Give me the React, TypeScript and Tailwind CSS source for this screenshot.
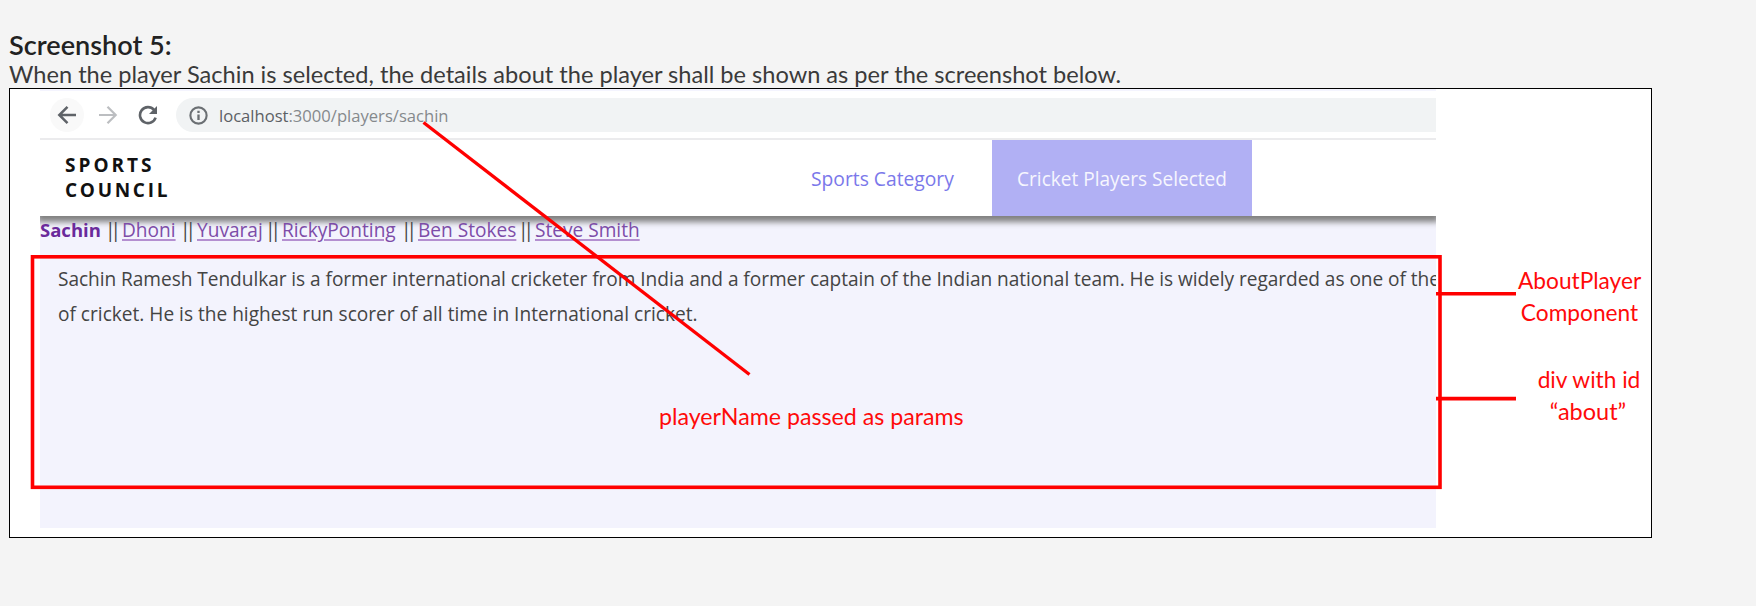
import React from "react";

const UI = "font-['Open_Sans','Noto_Sans',sans-serif]";

const players = [
  { name: "Dhoni", width: "w-[54px]" },
  { name: "Yuvaraj", width: "w-[64px]" },
  { name: "RickyPonting", width: "w-[115px]" },
  { name: "Ben Stokes", width: "w-[96px]" },
  { name: "Steve Smith", width: "w-[105px]" },
];

function Toolbar() {
  return (
    <div className="flex h-[51px] flex-col border-t-2 border-b-2 border-t-[#f4f4fe] border-b-[#ebebed]">
      <div className="mt-[7px] flex h-[34px] items-center pl-[10px]">
        <div className="flex h-[34px] w-[34px] items-center justify-center rounded-full bg-[#f9f9f9]">
          <svg width="20" height="20" viewBox="0 0 20 20" fill="none" stroke="#5f6368" strokeWidth="2.5">
            <path d="M19 10H3M10.5 1.8L2.3 10l8.2 8.2" />
          </svg>
        </div>
        <svg className="ml-[14px]" width="20" height="20" viewBox="0 0 20 20" fill="none" stroke="#bcbec1" strokeWidth="2.2">
          <path d="M1 10h16M9.5 1.8l8.2 8.2-8.2 8.2" />
        </svg>
        <svg className="ml-[20px]" width="20" height="20" viewBox="0 0 20 20" fill="none" stroke="#5f6368" strokeWidth="2.6">
          <path d="M16 4.8A8 8 0 1 0 17.6 12.6" />
          <path d="M19 1v8h-8z" fill="#5f6368" stroke="none" />
        </svg>
        <div className="ml-[18px] flex h-[34px] flex-1 items-center rounded-l-full bg-[#f1f3f4] pl-[13px]">
          <svg width="19" height="19" viewBox="0 0 18 18" fill="none" stroke="#6b6f73" strokeWidth="2">
            <circle cx="9" cy="9" r="7.7" />
            <path d="M9 8v5.2M9 4.6v2.1" strokeWidth="2.2" />
          </svg>
          <span className={`${UI} ml-[11px] pt-px text-[16.6px] leading-[33px] whitespace-nowrap text-[#85898c]`}>
            <span className="text-[#5c6064]">localhost</span>:3000/players/sachin
          </span>
        </div>
      </div>
    </div>
  );
}

function NavBar() {
  return (
    <div className="relative z-10 flex h-[76px] bg-white shadow-[0_3px_6px_3px_#808080] [clip-path:inset(0_0_-14px_0)]">
      <div className="w-[771px] pt-[13px] pl-[25px] text-[19px] leading-[25px] font-bold text-[#111]">
        <div className="tracking-[3px]">SPORTS</div>
        <div className="tracking-[2.7px]">COUNCIL</div>
      </div>
      <div className="w-[181px] text-[19.25px] leading-[78px] text-[#7b78ea]">Sports Category</div>
      <div className="w-[260px] bg-[#b1b0f4] text-center text-[19.05px] leading-[78px] text-[#f6f6fe]">
        Cricket Players Selected
      </div>
    </div>
  );
}

function PlayerLinks() {
  return (
    <div className="relative z-20 flex h-[26px] text-[19.1px] leading-[26px] whitespace-nowrap text-[#7d4ca8]">
      <span className="w-[61px] text-[18.5px] font-bold text-[#6a2a9b]">Sachin</span>
      {players.map((p) => (
        <React.Fragment key={p.name}>
          <span className="w-[21px] pl-[4px] tracking-[-5px] text-[#444]">||</span>
          <span className={`${p.width} underline decoration-[#b48fd0] decoration-2 underline-offset-2`}>{p.name}</span>
        </React.Fragment>
      ))}
    </div>
  );
}

function Browser() {
  return (
    <div className={`${UI} ml-[30px] h-[439px] w-[1396px] overflow-hidden bg-[#f3f3fd]`}>
      <div className="bg-white">
        <Toolbar />
      </div>
      <NavBar />
      <div className="pt-px">
        <PlayerLinks />
      </div>
      <div id="about" className="mt-[19px] ml-[18px] text-[19.1px] leading-[35px] whitespace-nowrap text-[#444]">
        <p className="tracking-[-0.05px]">
          Sachin Ramesh Tendulkar is a former international cricketer from India and a former captain of the Indian
          national team. He is widely regarded as one of the
        </p>
        <p>of cricket. He is the highest run scorer of all time in International cricket.</p>
      </div>
    </div>
  );
}

function Annotations() {
  return (
    <div className="pointer-events-none absolute inset-0 z-30 text-[22.7px] leading-[32px] whitespace-nowrap text-[#ff0a0a]">
      <svg className="absolute inset-0" width="1641" height="448" viewBox="10 89 1641 448" fill="none" stroke="#ff0000" strokeWidth="3.6">
        <rect x="32.5" y="256.8" width="1407.5" height="230.5" />
        <path d="M1436 293.8h80M1436 398.6h80" />
        <path d="M423.5 122.5L749.5 374.5" strokeWidth="3.3" />
      </svg>
      <div className="absolute top-[311px] left-[649px] text-[23.2px]">playerName passed as params</div>
      <div className="absolute top-[176px] left-[1508px] w-[123px] text-center">
        AboutPlayer
        <br />
        Component
      </div>
      <div className="absolute top-[275px] left-[1527px] w-[104px] text-center">div with id</div>
      <div className="absolute top-[306px] left-[1526px] w-[104px] text-center text-[23.5px]">“about”</div>
    </div>
  );
}

export default function App() {
  return (
    <div className="h-[606px] overflow-hidden bg-[#f4f4f4] pt-[30px] pl-[9px] font-['Lato',sans-serif] text-[#222]">
      <h2 className="h-[30px] text-[27.1px] leading-[30px] font-semibold whitespace-nowrap">Screenshot 5:</h2>
      <p className="h-[28px] text-[23.6px] leading-[28px] whitespace-nowrap text-[#3a3a3a]">
        When the player Sachin is selected, the details about the player shall be shown as per the screenshot below.
      </p>
      <div className="relative h-[450px] w-[1643px] border border-black bg-white">
        <Browser />
        <Annotations />
      </div>
    </div>
  );
}
